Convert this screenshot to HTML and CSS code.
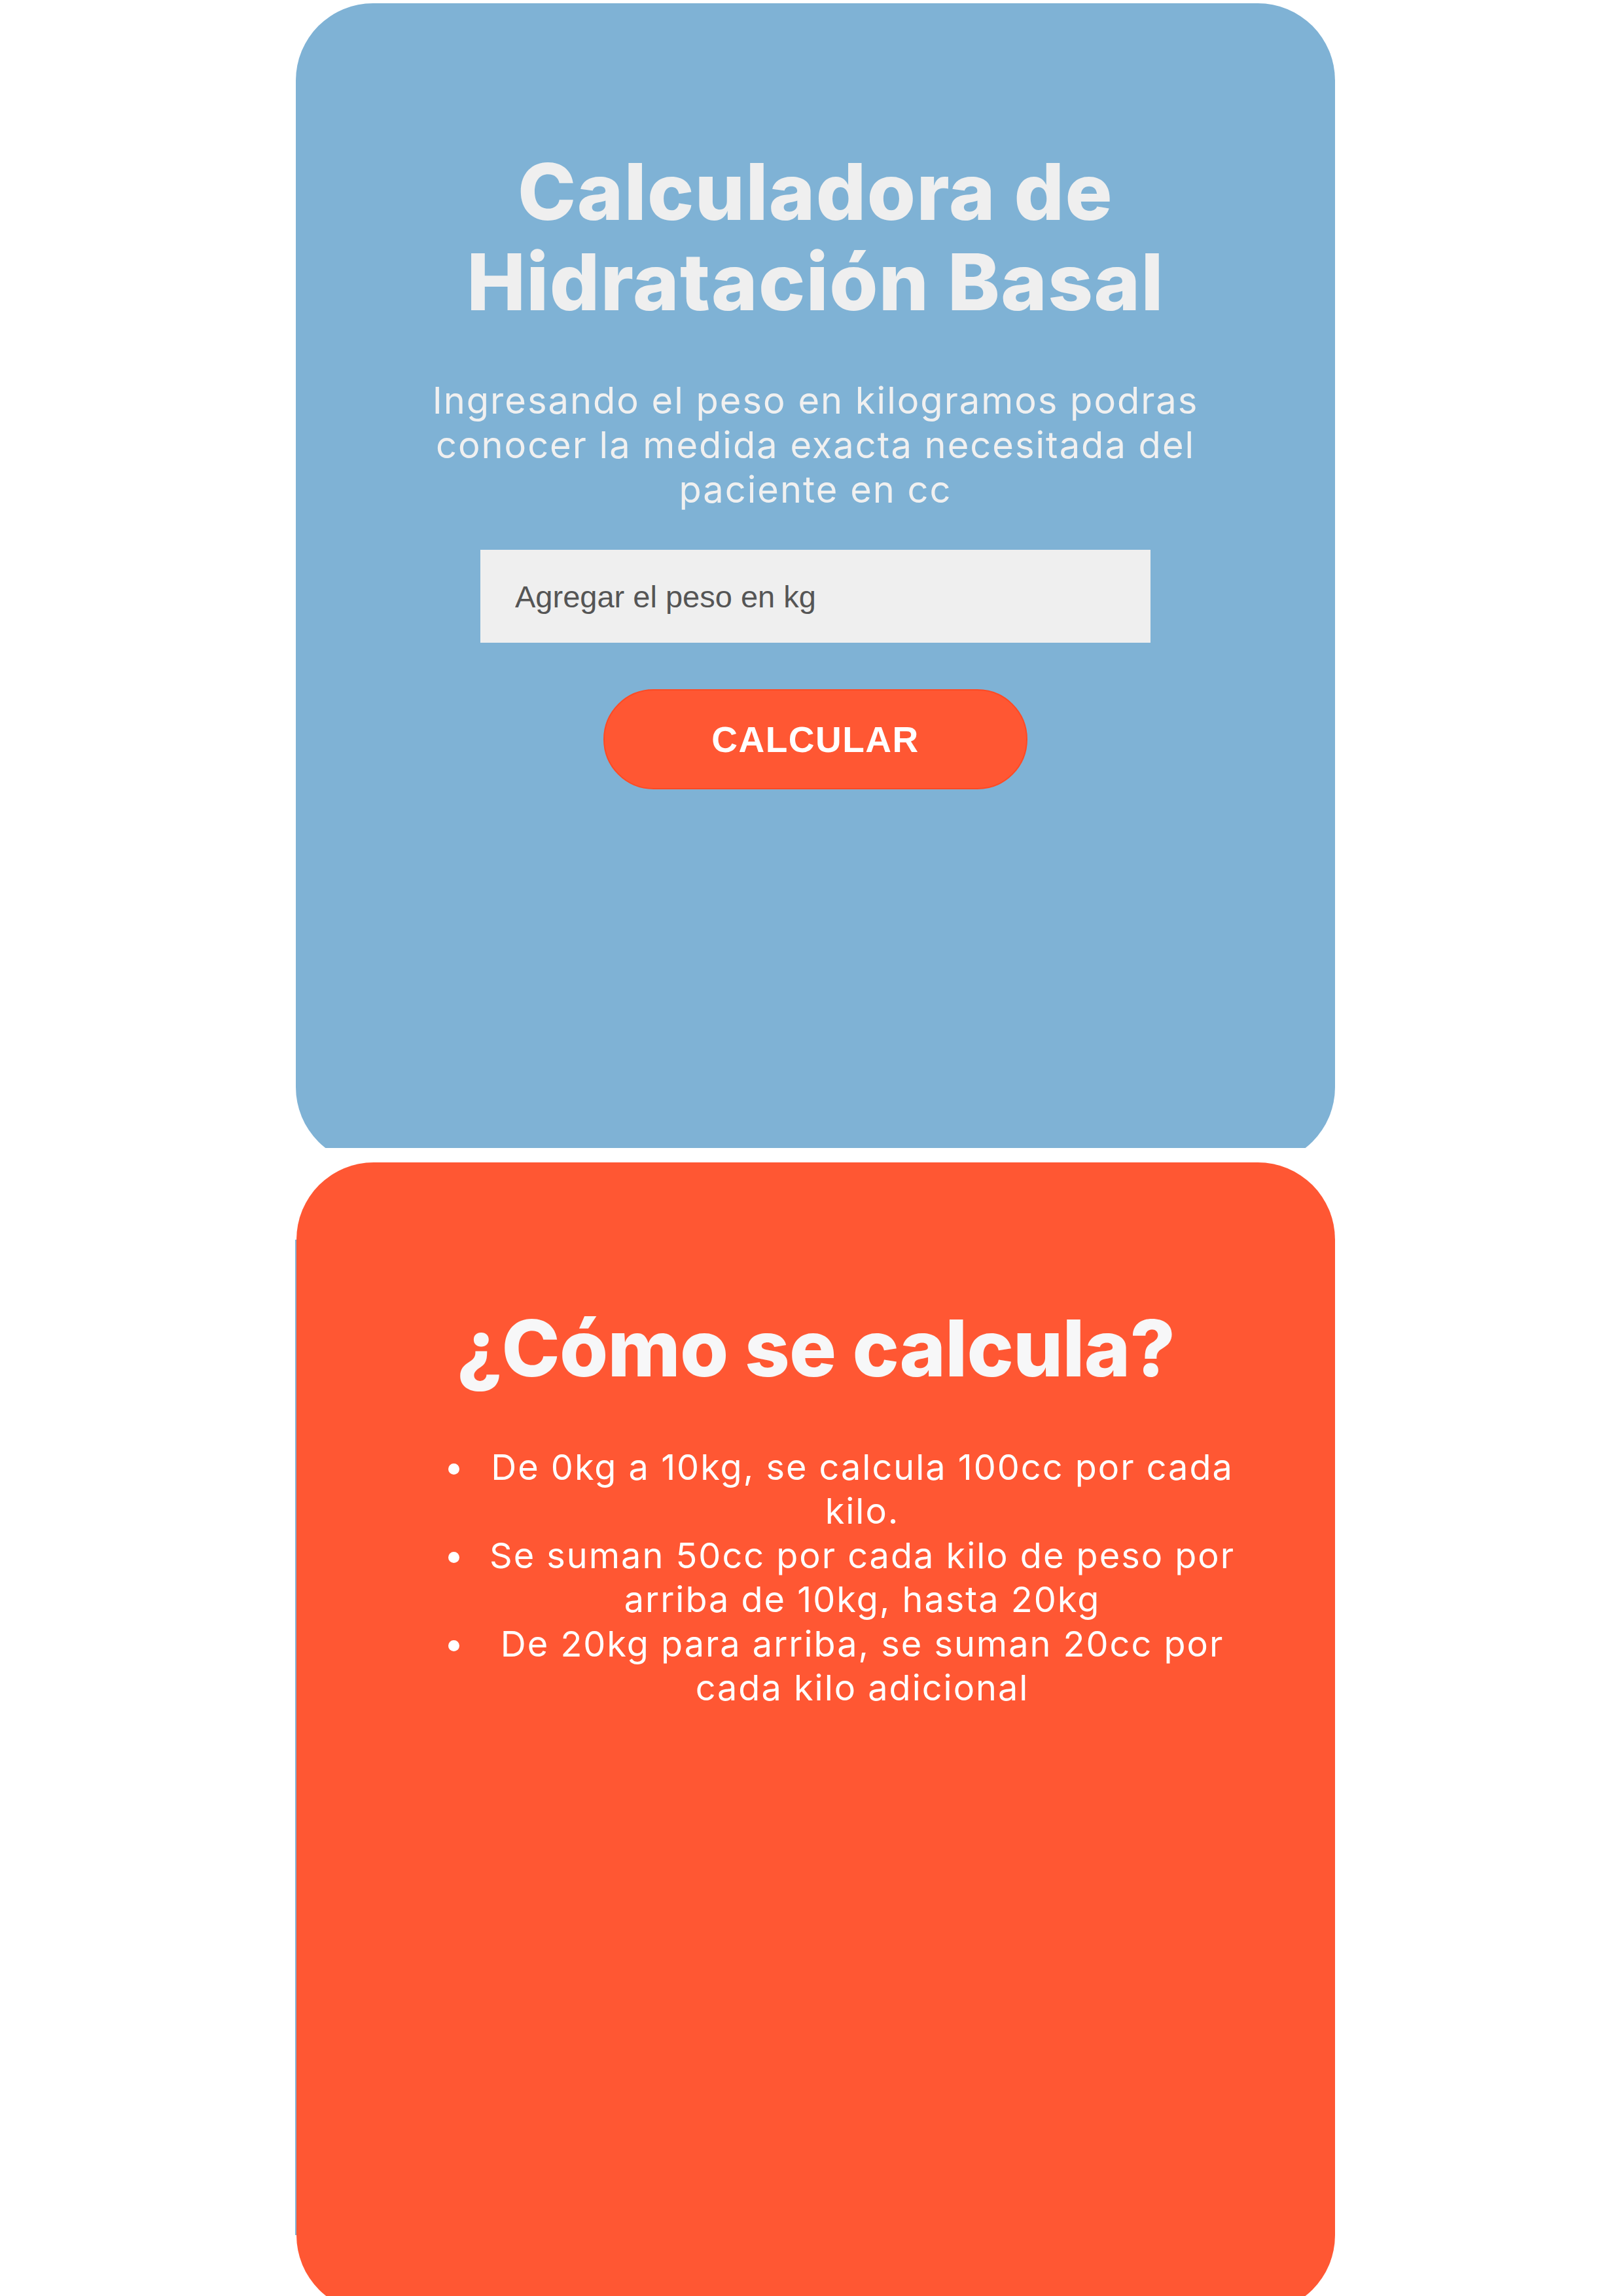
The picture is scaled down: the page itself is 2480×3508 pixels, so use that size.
FILE: index.html
```html
<!DOCTYPE html>
<html lang="es">
<head>
<meta charset="utf-8">
<title>Calculadora de Hidratación Basal</title>
<link rel="stylesheet" href="styles.css">
</head>
<body>
<main class="page">
  <div class="clip clip-top">
    <section class="card card-blue">
      <h1 class="title title-blue">Calculadora de Hidratación Basal</h1>
      <p class="lead">Ingresando el peso en kilogramos podras conocer la medida exacta necesitada del paciente en cc</p>
      <input class="weight" type="text" placeholder="Agregar el peso en kg">
      <button class="btn" type="button">CALCULAR</button>
    </section>
  </div>
  <div class="clip clip-bottom">
    <section class="card card-orange">
      <h2 class="title title-orange">¿Cómo se calcula?</h2>
      <ul class="rules">
        <li>De 0kg a 10kg, se calcula 100cc por cada kilo.</li>
        <li>Se suman 50cc por cada kilo de peso por arriba de 10kg, hasta 20kg</li>
        <li>De 20kg para arriba, se suman 20cc por cada kilo adicional</li>
      </ul>
    </section>
  </div>
</main>
</body>
</html>
```

FILE: styles.css
```css
html, body {
  margin: 0;
  padding: 0;
  background: #ffffff;
}

body {
  overflow: hidden;
}

.page {
  width: 1588px;
  margin-left: 452px;
  padding-top: 5px;
}

.clip {
  overflow: hidden;
}

.clip-top {
  height: 1749px;
}

.clip-bottom {
  height: 1732px;
  margin-top: 22px;
  padding-left: 2px;
  margin-left: -1px;
  background: linear-gradient(#7fb2d5, #7fb2d5) no-repeat 0 118px / 2px 1521px;
}

.card {
  box-sizing: border-box;
  border-radius: 118px;
  display: flex;
  flex-direction: column;
  align-items: center;
}

.card-blue {
  height: 1774px;
  background: #7fb2d5;
  padding-top: 219px;
}

.card-orange {
  height: 1757px;
  background: #ff5733;
  padding-top: 215px;
}

.title {
  margin: 0;
  max-width: 1300px;
  font-family: Inter, "DejaVu Sans", sans-serif;
  font-weight: 800;
  font-size: 120px;
  line-height: 138px;
  text-align: center;
}

.title-blue {
  color: #efefef;
  letter-spacing: 1.4px;
}

.title-orange {
  color: #f7f7f8;
  letter-spacing: -0.8px;
}

.lead {
  margin: 78px 0 0;
  width: 1240px;
  font-family: Inter, "DejaVu Sans", sans-serif;
  font-weight: 400;
  font-size: 56px;
  line-height: 68px;
  letter-spacing: 2px;
  text-align: center;
  color: #f0f0f0;
}

.weight {
  margin-top: 58px;
  width: 1024px;
  height: 142px;
  box-sizing: border-box;
  border: none;
  outline: none;
  background: #efefef;
  padding: 0 0 0 53px;
  font-family: "Liberation Sans", Arial, sans-serif;
  font-size: 47px;
  color: #555555;
}

.weight::placeholder {
  color: #555555;
  opacity: 1;
}

.btn {
  margin-top: 71px;
  width: 648px;
  height: 153px;
  box-sizing: border-box;
  padding: 0;
  border: 2px solid #ff4a24;
  border-radius: 77px;
  background: #ff5733;
  color: #ffffff;
  font-family: "Liberation Sans", Arial, sans-serif;
  font-weight: 700;
  font-size: 55px;
  letter-spacing: 1.5px;
}

.rules {
  margin: 79px 0 0;
  width: 1326px;
  box-sizing: border-box;
  padding-left: 142px;
  font-family: Inter, "DejaVu Sans", sans-serif;
  font-weight: 400;
  font-size: 54px;
  line-height: 67.4px;
  letter-spacing: 2px;
  text-align: center;
  color: #ffffff;
}
```
